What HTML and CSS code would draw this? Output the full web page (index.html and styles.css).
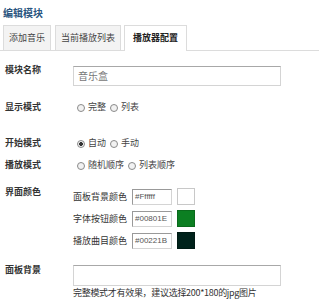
FILE: index.html
```html
<!DOCTYPE html>
<html lang="zh">
<head>
<meta charset="utf-8">
<link rel="stylesheet" href="styles.css">
</head>
<body>
<div class="title">编辑模块</div>
<div class="tabs">
  <div class="tab">添加音乐</div>
  <div class="tab">当前播放列表</div>
  <div class="tab active">播放器配置</div>
</div>
<div class="form">
  <div class="row row-name">
    <div class="lbl">模块名称</div>
    <div class="field"><div class="input wide">音乐盒</div></div>
  </div>
  <div class="row row-show">
    <div class="lbl">显示模式</div>
    <div class="options">
      <span class="radio"></span><span class="opt">完整</span>
      <span class="radio"></span><span class="opt">列表</span>
    </div>
  </div>
  <div class="row row-start">
    <div class="lbl">开始模式</div>
    <div class="options">
      <span class="radio checked"></span><span class="opt">自动</span>
      <span class="radio"></span><span class="opt">手动</span>
    </div>
  </div>
  <div class="row row-play">
    <div class="lbl">播放模式</div>
    <div class="options">
      <span class="radio"></span><span class="opt">随机顺序</span>
      <span class="radio"></span><span class="opt">列表顺序</span>
    </div>
  </div>
  <div class="row row-color">
    <div class="lbl">界面颜色</div>
    <div class="colors">
      <div class="crow"><span class="cname">面板背景颜色</span><span class="cinput">#Ffffff</span><span class="swatch sw-white"></span></div>
      <div class="crow"><span class="cname">字体按钮颜色</span><span class="cinput">#00801E</span><span class="swatch sw-green"></span></div>
      <div class="crow"><span class="cname">播放曲目颜色</span><span class="cinput">#00221B</span><span class="swatch sw-dark"></span></div>
    </div>
  </div>
  <div class="row row-bg">
    <div class="lbl">面板背景</div>
    <div class="field">
      <div class="input wide tall"></div>
      <div class="hint">完整模式才有效果，建议选择200*180的jpg图片</div>
    </div>
  </div>
</div>
</body>
</html>
```
FILE: styles.css
```css
* { box-sizing: border-box; }
html, body { margin: 0; padding: 0; background: #fff; }
body {
  width: 319px;
  font-family: "Noto Sans CJK SC", "Liberation Sans", sans-serif;
  font-size: 9px;
  line-height: 12px;
  color: #333;
}
.title {
  padding: 7px 0 0 3px;
  font-size: 10px;
  font-weight: bold;
  color: #2a557f;
  line-height: 12px;
  height: 19px;
}
.tabs {
  margin-top: 6px;
  display: flex;
  padding-left: 3px;
  border-bottom: 1px solid #dcdcdc;
  height: 26px;
}
.tab {
  height: 25px;
  line-height: 24px;
  padding: 0 5px;
  margin-right: 3px;
  background: #f3f3f3;
  border: 1px solid #dcdcdc;
  border-bottom: none;
  color: #444;
}
.tab:first-child { margin-right: 4px; }
.tab.active {
  background: #fff;
  font-weight: bold;
  color: #222;
  padding: 0 8px;
  height: 26px;
}
.form { padding-top: 13px; }
.row { display: flex; align-items: flex-start; }
.lbl {
  width: 73px;
  padding-left: 5px;
  font-weight: bold;
  color: #333;
  flex: none;
}
.row-name .field { margin-top: 2px; }
.input {
  border: 1px solid #d4d4d4;
  border-top-color: #a8a8a8;
  background: #fff;
  height: 20px;
  line-height: 18px;
  padding-left: 4px;
  font-size: 10px;
  color: #777;
}
.input.wide { width: 208px; }
.input.tall { height: 21px; }
.row-show { margin-top: 15px; }
.row-start { margin-top: 24px; }
.row-play { margin-top: 10px; }
.row-color { margin-top: 15px; }
.row-bg { margin-top: 15px; }
.row-bg .field { margin-top: 1px; }
.options {
  display: flex;
  align-items: center;
  margin-left: 4px;
  height: 12px;
  color: #444;
}
.radio {
  width: 8px;
  height: 8px;
  border-radius: 50%;
  border: 1px solid #8a8a8a;
  background: #f2f2f2;
  margin-right: 3px;
  margin-top: 1px;
}
.radio.checked {
  background: radial-gradient(circle, #333 0, #333 1.6px, #f2f2f2 2.2px);
}
.opt { margin-right: 4px; }
.colors { margin-top: 2px; }
.crow {
  display: flex;
  align-items: center;
  height: 17px;
  margin-bottom: 5px;
}
.crow:last-child { margin-bottom: 0; }
.cname { width: 59px; color: #333; }
.cinput {
  width: 40px;
  height: 16px;
  line-height: 14px;
  border: 1px solid #d4d4d4;
  border-top-color: #999;
  border-left-color: #999;
  padding-left: 2px;
  font-family: "Liberation Sans", sans-serif;
  font-size: 8px;
  color: #555;
  overflow: hidden;
  white-space: nowrap;
}
.swatch {
  width: 18px;
  height: 17px;
  margin-left: 5px;
  border: 1px solid #c8c8c8;
}
.sw-white { background: #ffffff; }
.sw-green { background: #0c7f22; border-color: #0a6a1c; }
.sw-dark { background: #00221b; border-color: #001a14; }
.hint {
  margin-top: 1px;
  color: #333;
  white-space: nowrap;
  letter-spacing: -0.3px;
}
```
